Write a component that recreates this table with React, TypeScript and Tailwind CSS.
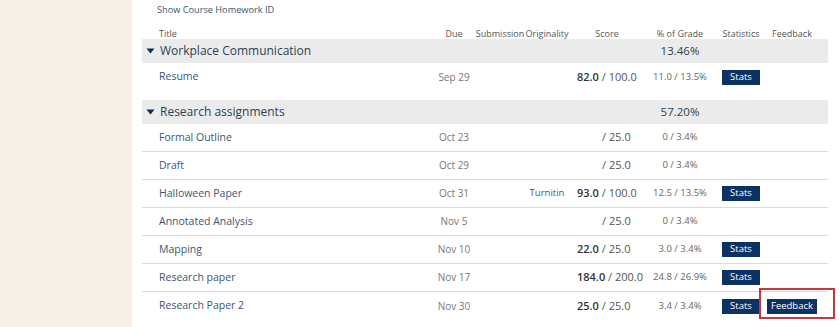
import React from "react";

type Item = {
  title: string;
  due: string;
  originality?: string;
  score?: string;
  total: string;
  grade: string;
  stats?: boolean;
  feedback?: boolean;
};

const groups: { name: string; pct: string; items: Item[]; spacer?: boolean }[] = [
  {
    name: "Workplace Communication",
    pct: "13.46%",
    spacer: true,
    items: [{ title: "Resume", due: "Sep 29", score: "82.0", total: "100.0", grade: "11.0 / 13.5%", stats: true }],
  },
  {
    name: "Research assignments",
    pct: "57.20%",
    items: [
      { title: "Formal Outline", due: "Oct 23", total: "25.0", grade: "0 / 3.4%" },
      { title: "Draft", due: "Oct 29", total: "25.0", grade: "0 / 3.4%" },
      { title: "Halloween Paper", due: "Oct 31", originality: "Turnitin", score: "93.0", total: "100.0", grade: "12.5 / 13.5%", stats: true },
      { title: "Annotated Analysis", due: "Nov 5", total: "25.0", grade: "0 / 3.4%" },
      { title: "Mapping", due: "Nov 10", score: "22.0", total: "25.0", grade: "3.0 / 3.4%", stats: true },
      { title: "Research paper", due: "Nov 17", score: "184.0", total: "200.0", grade: "24.8 / 26.9%", stats: true },
      { title: "Research Paper 2", due: "Nov 30", score: "25.0", total: "25.0", grade: "3.4 / 3.4%", stats: true, feedback: true },
    ],
  },
];

const cols = "grid grid-cols-[291px_42px_50px_44px_76px_70px_52px_50px_11px] items-center";

function Caret() {
  return (
    <svg width="9" height="6" viewBox="0 0 9 6" className="mr-[5px]">
      <path d="M0.5 0.5 L8.5 0.5 L4.5 5.5 Z" fill="#0b2f5c" />
    </svg>
  );
}

function Btn({ label, w }: { label: string; w: string }) {
  return (
    <span className={`inline-flex h-[15px] items-center justify-center bg-[#0b3263] text-[9.5px] text-white ${w}`}>
      {label}
    </span>
  );
}

export default function App() {
  return (
    <div className="flex h-[327px] w-[840px] overflow-hidden bg-white" style={{ fontFamily: "'Open Sans', sans-serif" }}>
      <div className="w-[132px] shrink-0 bg-[#f6efe5]" />
      <div className="flex-1 pl-[10px]">
        <div className="h-[19px] pl-[15px] pt-[3px] text-[9.2px] text-[#3b5675]">Show Course Homework ID</div>

        <div className="w-[686px]">
          {/* header */}
          <div className={`${cols} h-[20px] pt-[8px] text-[9px] text-[#555] whitespace-nowrap`}>
            <div className="pl-[17px]">Title</div>
            <div className="text-center">Due</div>
            <div className="text-center">Submission</div>
            <div className="text-center">Originality</div>
            <div className="text-center">Score</div>
            <div className="text-center">% of Grade</div>
            <div className="text-center">Statistics</div>
            <div className="text-center">Feedback</div>
            <div />
          </div>

          {groups.map((g) => (
            <div key={g.name}>
              <div className={`${cols} h-[24px] bg-[#ebebeb] text-[#2a3f58]`}>
                <div className="flex items-center pl-[4px] text-[12px]">
                  <Caret />
                  {g.name}
                </div>
                <div />
                <div />
                <div />
                <div />
                <div className="text-center text-[11.5px]">{g.pct}</div>
                <div />
                <div />
                <div />
              </div>

              {g.items.map((it, i) => (
                <div
                  key={it.title}
                  className={`${cols} h-[28px] ${!g.spacer && i < g.items.length - 1 ? "border-b border-[#dcdcdc]" : ""}`}
                >
                  <div className="pl-[17px] text-[10.5px] text-[#3b5675]">{it.title}</div>
                  <div className="text-center text-[10px] text-[#777]">{it.due}</div>
                  <div />
                  <div className="text-center text-[9.5px] text-[#2f5a86]">{it.originality}</div>
                  <div className="pl-[8px] text-[11px] text-[#555] whitespace-nowrap">
                    {it.score ? (
                      <span className="font-semibold text-[#333]">{it.score} </span>
                    ) : (
                      <span className="inline-block w-[25px]" />
                    )}
                    / {it.total}
                  </div>
                  <div className="text-center text-[9.5px] text-[#666] whitespace-nowrap">{it.grade}</div>
                  <div className="flex justify-center">{it.stats && <Btn label="Stats" w="w-[38px]" />}</div>
                  <div className="relative flex justify-center">
                    {it.feedback && (
                      <>
                        <Btn label="Feedback" w="w-[50px]" />
                        <div className="absolute left-[-8px] top-[-11px] h-[31px] w-[76px] border-2 border-[#c9363d]" />
                      </>
                    )}
                  </div>
                  <div />
                </div>
              ))}
              {g.spacer && <div className="h-[9px]" />}
            </div>
          ))}
        </div>
      </div>
    </div>
  );
}
